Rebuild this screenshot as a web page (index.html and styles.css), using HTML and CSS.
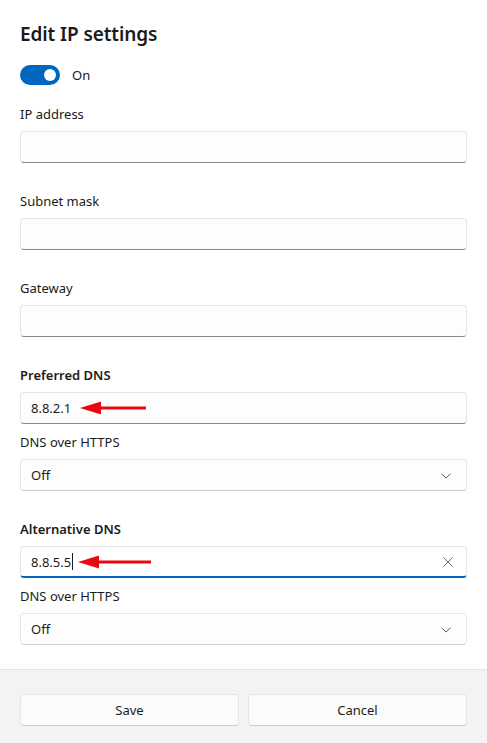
FILE: index.html
```html
<!DOCTYPE html>
<html>
<head>
<meta charset="utf-8">
<link rel="stylesheet" href="styles.css">
</head>
<body>
<div class="dialog">
  <div class="content">
    <h1 class="title">Edit IP settings</h1>
    <div class="toggle-row">
      <span class="toggle"><span class="knob"></span></span>
      <span class="toggle-label">On</span>
    </div>

    <div class="group">
      <div class="label">IP address</div>
      <div class="field"></div>
    </div>
    <div class="group">
      <div class="label">Subnet mask</div>
      <div class="field"></div>
    </div>
    <div class="group">
      <div class="label">Gateway</div>
      <div class="field"></div>
    </div>
    <div class="group">
      <div class="label bold">Preferred DNS</div>
      <div class="field"><span class="value">8.8.2.1</span>
        <svg class="arrow arrow1" width="70" height="14" viewBox="0 0 70 14"><path d="M0 7 L21 0.5 L21 5.5 L66 5.5 L66 8.5 L21 8.5 L21 13.5 Z" fill="#e8090f"/></svg>
      </div>
      <div class="label sub">DNS over HTTPS</div>
      <div class="field select"><span class="value">Off</span>
        <svg class="chev" width="10" height="6" viewBox="0 0 10 6"><path d="M0.5 0.8 L5 5 L9.5 0.8" fill="none" stroke="#5c5c5c" stroke-width="1"/></svg>
      </div>
    </div>
    <div class="group">
      <div class="label bold">Alternative DNS</div>
      <div class="field focused"><span class="value">8.8.5.5</span><span class="caret"></span>
        <svg class="arrow arrow2" width="76" height="14" viewBox="0 0 76 14"><path d="M0 7 L21 0.5 L21 5.5 L73 5.5 L73 8.5 L21 8.5 L21 13.5 Z" fill="#e8090f"/></svg>
        <svg class="clear" width="10" height="10" viewBox="0 0 10 10"><path d="M0.5 0.5 L9.5 9.5 M9.5 0.5 L0.5 9.5" stroke="#6a6a6a" stroke-width="1" fill="none"/></svg>
      </div>
      <div class="label sub">DNS over HTTPS</div>
      <div class="field select"><span class="value">Off</span>
        <svg class="chev" width="10" height="6" viewBox="0 0 10 6"><path d="M0.5 0.8 L5 5 L9.5 0.8" fill="none" stroke="#5c5c5c" stroke-width="1"/></svg>
      </div>
    </div>
  </div>
  <div class="footer">
    <button class="btn">Save</button>
    <button class="btn">Cancel</button>
  </div>
</div>
</body>
</html>
```

FILE: styles.css
```css
html, body {
  margin: 0;
  padding: 0;
  background: #ffffff;
}
body {
  font-family: "Noto Sans", "Open Sans", sans-serif;
  color: #1b1b1b;
  font-size: 13px;
}
.dialog {
  width: 487px;
  height: 743px;
  display: flex;
  flex-direction: column;
}
.content {
  padding: 20px 20px 24px 20px;
  display: flex;
  flex-direction: column;
}
.title {
  margin: 0;
  font-size: 19px;
  font-weight: 600;
  line-height: 28px;
  height: 28px;
  letter-spacing: -0.1px;
}
.toggle-row {
  margin-top: 17px;
  height: 20px;
  display: flex;
  align-items: center;
  gap: 12px;
}
.toggle {
  width: 40px;
  height: 20px;
  border-radius: 10px;
  background: #0067c0;
  display: flex;
  align-items: center;
  justify-content: flex-end;
  padding-right: 4px;
  box-sizing: border-box;
}
.knob {
  width: 12px;
  height: 12px;
  border-radius: 50%;
  background: #ffffff;
}
.toggle-label {
  font-size: 13px;
  line-height: 20px;
}
.group {
  display: flex;
  flex-direction: column;
  margin-top: 19px;
}
.group + .group {
  margin-top: 28px;
}
.label {
  line-height: 20px;
  height: 20px;
  font-size: 13px;
  margin-bottom: 7px;
}
.label.bold {
  font-weight: 600;
}
.label.sub {
  margin-top: 8px;
}
.field {
  position: relative;
  height: 32px;
  box-sizing: border-box;
  border: 1px solid #e5e5e5;
  border-bottom: 1px solid #8a8a8a;
  border-radius: 4px;
  background: #fdfdfd;
  display: flex;
  align-items: center;
  padding-left: 10px;
}
.field.select {
  border-bottom-color: #d0d0d0;
  background: #fdfdfd;
}
.field.focused {
  background: #ffffff;
  border-bottom: 2px solid #0067c0;
}
.value {
  font-size: 13px;
  line-height: 20px;
}
.caret {
  display: inline-block;
  width: 1px;
  height: 17px;
  background: #1b1b1b;
  margin-left: 1px;
}
.arrow {
  position: absolute;
  top: 8px;
}
.arrow1 {
  left: 59px;
}
.arrow2 {
  left: 57px;
  top: 8px;
}
.chev {
  position: absolute;
  right: 15px;
  top: 13px;
}
.clear {
  position: absolute;
  right: 13px;
  top: 10px;
}
.footer {
  flex: 1;
  background: #f3f3f3;
  border-top: 1px solid #e5e5e5;
  padding: 24px 20px 0 20px;
  display: flex;
  gap: 9px;
  align-items: flex-start;
}
.btn {
  flex: 1;
  height: 32px;
  border: 1px solid #e5e5e5;
  border-bottom-color: #cccccc;
  border-radius: 4px;
  background: #fbfbfb;
  font-family: "Noto Sans", "Open Sans", sans-serif;
  font-size: 13px;
  color: #1b1b1b;
  padding: 0;
}
```
